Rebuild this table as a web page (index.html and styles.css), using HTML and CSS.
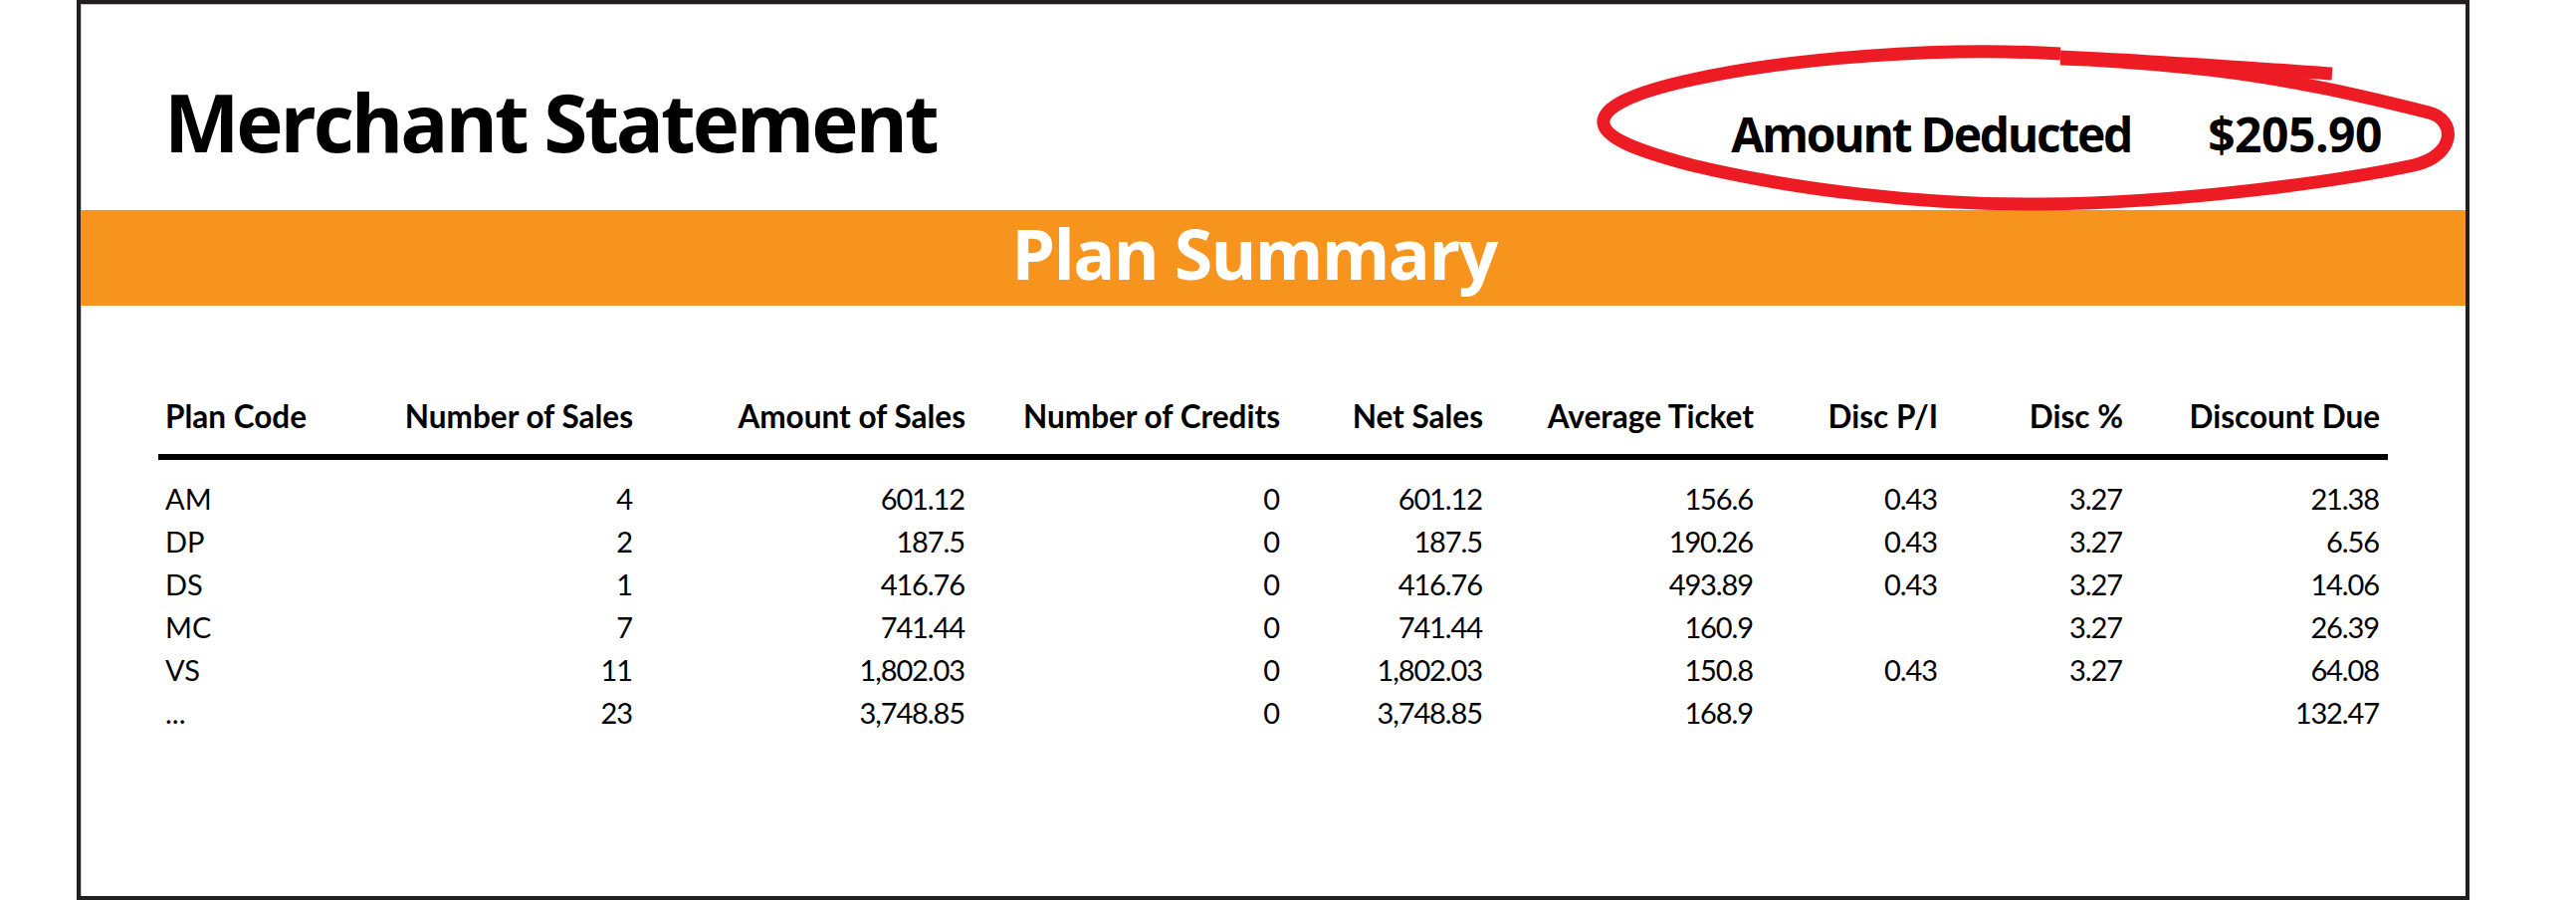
FILE: index.html
```html
<!DOCTYPE html>
<html lang="en">
<head>
<meta charset="utf-8">
<title>Merchant Statement</title>
<link rel="stylesheet" href="styles.css">
</head>
<body>
<div class="page">
  <div class="sheet">
    <header class="sheet-head">
      <h1 class="title">Merchant Statement</h1>
      <div class="deducted">
        <span class="deducted-label">Amount Deducted</span>
        <span class="deducted-value">$205.90</span>
      </div>
    </header>
    <div class="band">Plan Summary</div>
    <section class="summary">
      <div class="cols head">
        <div class="cell first">Plan Code</div>
        <div class="cell">Number of Sales</div>
        <div class="cell">Amount of Sales</div>
        <div class="cell">Number of Credits</div>
        <div class="cell">Net Sales</div>
        <div class="cell">Average Ticket</div>
        <div class="cell">Disc P/I</div>
        <div class="cell">Disc %</div>
        <div class="cell">Discount Due</div>
      </div>
      <div class="cols body">
        <div class="cell first">AM</div><div class="cell">4</div><div class="cell">601.12</div><div class="cell">0</div><div class="cell">601.12</div><div class="cell">156.6</div><div class="cell">0.43</div><div class="cell">3.27</div><div class="cell">21.38</div>
        <div class="cell first">DP</div><div class="cell">2</div><div class="cell">187.5</div><div class="cell">0</div><div class="cell">187.5</div><div class="cell">190.26</div><div class="cell">0.43</div><div class="cell">3.27</div><div class="cell">6.56</div>
        <div class="cell first">DS</div><div class="cell">1</div><div class="cell">416.76</div><div class="cell">0</div><div class="cell">416.76</div><div class="cell">493.89</div><div class="cell">0.43</div><div class="cell">3.27</div><div class="cell">14.06</div>
        <div class="cell first">MC</div><div class="cell">7</div><div class="cell">741.44</div><div class="cell">0</div><div class="cell">741.44</div><div class="cell">160.9</div><div class="cell"></div><div class="cell">3.27</div><div class="cell">26.39</div>
        <div class="cell first">VS</div><div class="cell">11</div><div class="cell">1,802.03</div><div class="cell">0</div><div class="cell">1,802.03</div><div class="cell">150.8</div><div class="cell">0.43</div><div class="cell">3.27</div><div class="cell">64.08</div>
        <div class="cell first">...</div><div class="cell">23</div><div class="cell">3,748.85</div><div class="cell">0</div><div class="cell">3,748.85</div><div class="cell">168.9</div><div class="cell"></div><div class="cell"></div><div class="cell">132.47</div>
      </div>
    </section>
  </div>
  <svg class="circle" viewBox="0 0 2588 300" width="2588" height="300" aria-hidden="true">
    <path d="M 2070 54 C 1950 47, 1800 58, 1700 80 C 1640 93, 1609 108, 1611 124 C 1613 138, 1640 150, 1700 166 C 1800 190, 1930 206, 2050 205 C 2200 204, 2360 180, 2425 166 C 2468 156, 2468 120, 2440 113 C 2380 98, 2300 78, 2200 68 C 2150 63, 2110 60, 2070 59"/>
    <path d="M 2343 74 C 2270 69, 2160 61, 2070 57"/>
  </svg>
</div>
</body>
</html>
```
FILE: styles.css
```css
html, body {
  margin: 0;
  padding: 0;
  background: #ffffff;
}

.page {
  position: relative;
  width: 2588px;
  height: 904px;
  overflow: hidden;
}

.sheet {
  margin-left: 77px;
  width: 2404px;
  height: 904px;
  box-sizing: border-box;
  border: 4px solid #231f20;
  box-shadow: inset 1px 1px 0 #c4c4c4;
  background: #ffffff;
}

.sheet-head {
  height: 207px;
  box-sizing: border-box;
  padding: 78px 84px 0 84px;
  display: flex;
  align-items: baseline;
}

.title {
  margin: 0;
  font-family: "Open Sans", "Noto Sans", sans-serif;
  font-weight: 700;
  font-size: 80px;
  line-height: 80px;
  letter-spacing: -3.1px;
  color: #000000;
}

.deducted {
  margin-left: auto;
  display: flex;
  align-items: baseline;
  gap: 77px;
  font-family: "Open Sans", "Noto Sans", sans-serif;
  font-weight: 700;
  font-size: 48px;
  line-height: 48px;
  color: #000000;
}

.deducted-label {
  letter-spacing: -2.3px;
}

.deducted-value {
  letter-spacing: -0.5px;
}

.band {
  height: 96px;
  box-sizing: border-box;
  padding: 0 38px 10px 0;
  background: #f7941e;
  color: #ffffff;
  text-align: center;
  font-family: "Open Sans", "Noto Sans", sans-serif;
  font-weight: 700;
  font-size: 70px;
  line-height: 86px;
  letter-spacing: -1.7px;
}

.summary {
  padding: 90px 0 0 78px;
}

.cols {
  display: grid;
  grid-template-columns: 221px 264px 334px 316px 204px 272px 185px 186px 258px;
  width: 2240px;
  color: #000000;
  font-family: Lato, "Open Sans", sans-serif;
}

.cell {
  text-align: right;
  padding-right: 8px;
  white-space: nowrap;
}

.cell.first {
  text-align: left;
  padding-left: 7px;
  padding-right: 0;
}

.head .cell {
  font-weight: 700;
  font-size: 31.5px;
  line-height: 43px;
  padding-bottom: 16px;
  border-bottom: 6px solid #000000;
}

.body {
  margin-top: 17px;
}

.body .cell {
  font-weight: 400;
  font-size: 29px;
  line-height: 43px;
  min-height: 43px;
  letter-spacing: -1.1px;
  padding-right: 9px;
}

.body .cell.first {
  letter-spacing: 0;
  padding-right: 0;
}

.circle {
  position: absolute;
  left: 0;
  top: 0;
  pointer-events: none;
}

.circle path {
  fill: none;
  stroke: #ed1c24;
  stroke-width: 13;
  stroke-linecap: butt;
  stroke-linejoin: round;
}
```
